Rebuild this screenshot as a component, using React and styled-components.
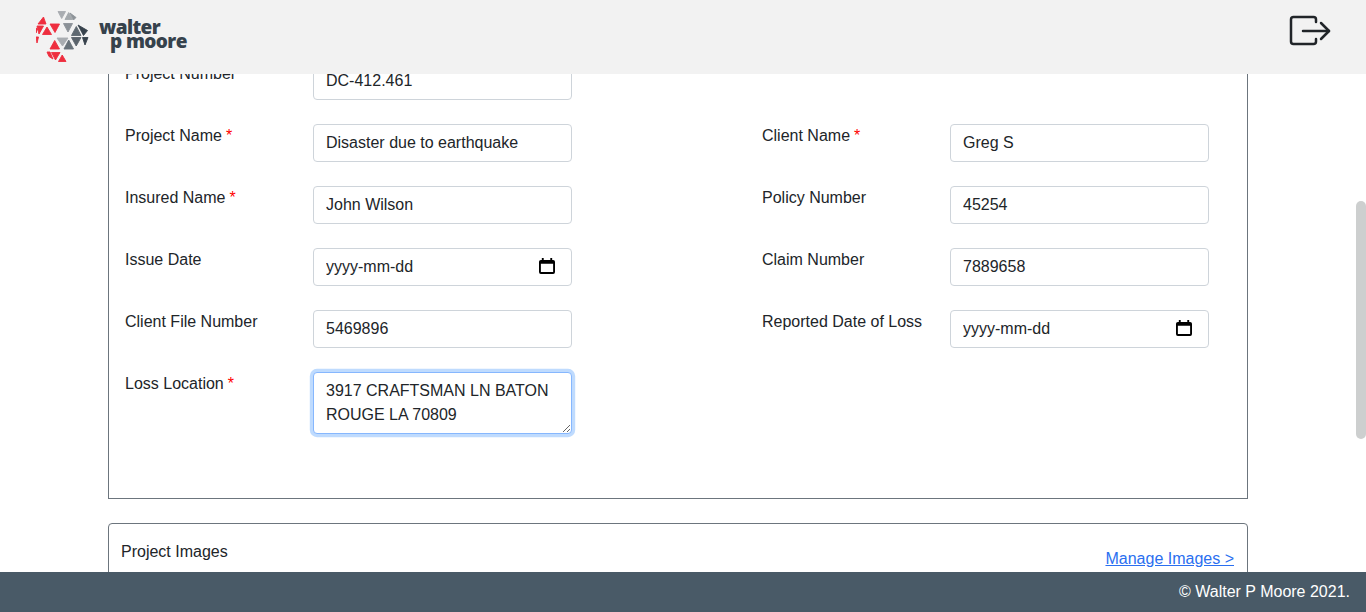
import styled, { createGlobalStyle } from "styled-components";

const GlobalStyle = createGlobalStyle`
  * { box-sizing: border-box; }
  html, body { margin: 0; height: 100%; overflow: hidden; background: #fff; }
  body {
    font-family: "Liberation Sans", Arial, sans-serif;
    font-size: 16px;
    line-height: 24px;
    color: #212529;
  }
`;

const Page = styled.div`
  position: relative;
  height: 100vh;
  display: flex;
  flex-direction: column;
  overflow: hidden;
`;

const Header = styled.header`
  flex: none;
  height: 74px;
  display: flex;
  align-items: flex-start;
  justify-content: space-between;
  padding: 11px 36px 0 36px;
  background: #f2f2f2;
  position: relative;
  z-index: 2;
`;

const Brand = styled.div`
  display: flex;
  align-items: flex-start;
  gap: 10px;
`;

const Wordmark = styled.div`
  margin-top: 9px;
  display: flex;
  flex-direction: column;
  font-family: "Open Sans", sans-serif;
  font-weight: 800;
  font-size: 19px;
  line-height: 14px;
  letter-spacing: -0.6px;
  color: #36424c;

  span + span {
    margin-left: 11px;
  }
`;

const LogoutButton = styled.button`
  border: 0;
  padding: 0;
  margin: 4px -1px 0 0;
  background: none;
  display: block;
  line-height: 0;
  color: #212529;
`;

const Main = styled.main`
  flex: 1;
  min-height: 0;
  overflow: hidden;
  padding-left: 108px;
`;

const FormCard = styled.section`
  width: 1140px;
  margin-top: -41px;
  padding: 28px 16px 64px 16px;
  border: 1px solid #6c757d;
  display: flex;
  flex-direction: column;
  gap: 24px;
`;

const Row = styled.div`
  display: grid;
  grid-template-columns: 188px 259px 190px 188px 259px;
  align-items: start;
`;

const Label = styled.label`
  grid-column: ${(p) => (p.$right ? 4 : 1)};
`;

const Required = styled.span`
  color: #f00;
  margin-left: 4px;
`;

const Field = styled.div`
  position: relative;
  grid-column: ${(p) => (p.$right ? 5 : 2)};
`;

const Input = styled.input`
  display: block;
  width: 100%;
  height: 38px;
  padding: 6px 12px;
  border: 1px solid #ced4da;
  border-radius: 4px;
  background: #fff;
  color: #212529;
  font: inherit;
  outline: none;
`;

const TextArea = styled.textarea`
  display: block;
  width: 100%;
  height: 62px;
  padding: 6px 12px;
  border: 1px solid #86b7fe;
  border-radius: 4px;
  box-shadow: 0 0 0 3.2px #bfdbfe;
  background: #fff;
  color: #212529;
  font: inherit;
  outline: none;
  resize: vertical;
`;

const CalendarIcon = styled.svg`
  position: absolute;
  top: 10px;
  right: 17px;
  width: 16px;
  height: 16px;
`;

const ImagesCard = styled.section`
  width: 1140px;
  min-height: 90px;
  margin-top: 24px;
  padding: 16px 13px 0 12px;
  border: 1px solid #6c757d;
  border-radius: 4px;
  display: flex;
  justify-content: space-between;
  align-items: flex-start;
`;

const ManageLink = styled.a`
  margin-top: 7px;
  color: #2a6ff0;
  text-decoration: underline;
`;

const Footer = styled.footer`
  flex: none;
  height: 40px;
  padding-right: 16px;
  display: flex;
  align-items: center;
  justify-content: flex-end;
  background: #495a67;
  color: #fff;
  position: relative;
  z-index: 2;
`;

const ScrollThumb = styled.div`
  position: absolute;
  top: 201px;
  right: 0;
  width: 10px;
  height: 238px;
  border-radius: 5px;
  background: #cdcfcf;
`;

const logoTriangles = [
  ["#a9adb1", "22,0.5 29.5,0.5 25.7,7.5"],
  ["#a3a8ac", "29,8.5 36.5,8.5 32.7,1.5"],
  ["#8d9398", "34,2 40,6.5 37.5,9"],
  ["#8b9197", "27.5,12.5 36.5,12.5 32,21"],
  ["#5f6971", "35.5,24.5 45,24.5 40.3,15.5"],
  ["#37424c", "42,14 51.5,19.5 47.5,24.5"],
  ["#a9adb1", "21,27 32,27 26.5,35"],
  ["#69737a", "28,38 37.5,38 32.7,29"],
  ["#5a636b", "35.5,26.5 45,26.5 40.2,35"],
  ["#37424c", "46.5,26.5 52,26.5 49,34"],
  ["#ee2e3e", "2,13 10,13 7.5,6"],
  ["#ee2e3e", "1,15 7.5,15 3,23"],
  ["#ee2e3e", "6.5,23.5 15.5,23.5 11,16"],
  ["#ee2e3e", "14,13 23.5,13 19,21.5"],
  ["#ee2e3e", "0,17 1.5,18 0,22"],
  ["#ee2e3e", "0,26 2.5,26 1,32"],
  ["#ee2e3e", "14,38 23.5,38 18.7,29.5"],
  ["#ee2e3e", "11,41 14,41 17,48 13,45.5"],
  ["#ee2e3e", "15.5,41.5 24,41.5 19.5,49"],
  ["#ee2e3e", "22.5,50.5 30,50.5 26.2,44"],
];

const Logo = () => (
  <svg width="53" height="52" viewBox="0 0 53 52" aria-hidden="true">
    {logoTriangles.map(([fill, points]) => (
      <polygon key={points} fill={fill} stroke={fill} strokeWidth="0.9" strokeLinejoin="round" points={points} />
    ))}
  </svg>
);

const LogoutIcon = () => (
  <svg width="42" height="31" viewBox="0 0 42 31" fill="none" stroke="currentColor" strokeWidth="2.5" strokeLinecap="round" strokeLinejoin="round" aria-hidden="true">
    <path d="M27 7V4.500A2.500 2.500 0 0 0 24.500 2H4.500A2.500 2.500 0 0 0 2 4.500V26.500A2.500 2.500 0 0 0 4.500 29H24.500A2.500 2.500 0 0 0 27 26.500V24" />
    <path d="M14 16H40" />
    <path d="M32 8L40 16L32 24" />
  </svg>
);

const Calendar = () => (
  <CalendarIcon viewBox="0 0 17 17" aria-hidden="true">
    <path
      fill="#000"
      fillRule="evenodd"
      d="M3 0h2v2h7V0h2v2h1a2 2 0 0 1 2 2v11a2 2 0 0 1-2 2H2a2 2 0 0 1-2-2V4a2 2 0 0 1 2-2h1V0zM2 6v9h13V6H2z"
    />
  </CalendarIcon>
);

const FormField = ({ label, required, value, date, area, right }) => (
  <>
    <Label $right={right}>
      {label}
      {required && <Required>*</Required>}
    </Label>
    <Field $right={right}>
      {area ? (
        <TextArea defaultValue={value} />
      ) : (
        <Input type="text" defaultValue={value} />
      )}
      {date && <Calendar />}
    </Field>
  </>
);

export default function App() {
  return (
    <Page>
      <GlobalStyle />
      <Header>
        <Brand>
          <Logo />
          <Wordmark>
            <span>walter</span>
            <span>p moore</span>
          </Wordmark>
        </Brand>
        <LogoutButton type="button" aria-label="Log out">
          <LogoutIcon />
        </LogoutButton>
      </Header>
      <Main>
        <FormCard>
          <Row>
            <FormField label="Project Number" value="DC-412.461" />
          </Row>
          <Row>
            <FormField label="Project Name" required value="Disaster due to earthquake" />
            <FormField label="Client Name" required value="Greg S" right />
          </Row>
          <Row>
            <FormField label="Insured Name" required value="John Wilson" />
            <FormField label="Policy Number" value="45254" right />
          </Row>
          <Row>
            <FormField label="Issue Date" value="yyyy-mm-dd" date />
            <FormField label="Claim Number" value="7889658" right />
          </Row>
          <Row>
            <FormField label="Client File Number" value="5469896" />
            <FormField label="Reported Date of Loss" value="yyyy-mm-dd" date right />
          </Row>
          <Row>
            <FormField label="Loss Location" required area value="3917 CRAFTSMAN LN BATON ROUGE LA 70809" />
          </Row>
        </FormCard>
        <ImagesCard>
          <span>Project Images</span>
          <ManageLink href="#">Manage Images &gt;</ManageLink>
        </ImagesCard>
      </Main>
      <Footer>© Walter P Moore 2021.</Footer>
      <ScrollThumb />
    </Page>
  );
}
